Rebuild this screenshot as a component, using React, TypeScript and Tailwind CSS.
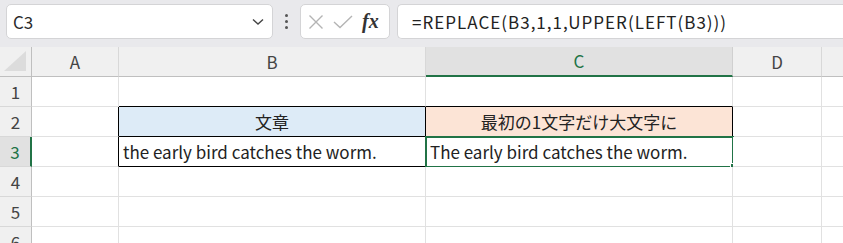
import React from 'react'

const FONT = { fontFamily: '"Noto Sans CJK JP", "Noto Sans", sans-serif' }

const COLS = ['A', 'B', 'C', 'D', 'E']
const ROWS = [1, 2, 3, 4, 5, 6]

// which cells carry the black table border
const blackRight = new Set(['A2', 'A3', 'B2', 'C2', 'B3', 'C3'])
const blackBottom = new Set(['B1', 'C1', 'B2', 'C2', 'B3', 'C3'])

const CELLS: Record<string, { text: string; className: string }> = {
  B2: { text: '文章', className: 'bg-[#ddebf7] justify-center' },
  C2: { text: '最初の1文字だけ大文字に', className: 'bg-[#fce4d6] justify-center' },
  B3: { text: 'the early bird catches the worm.', className: 'bg-white justify-start pl-[4px]' },
  C3: { text: 'The early bird catches the worm.', className: 'bg-white justify-start pl-[4px]' },
}

function Toolbar() {
  return (
    <div className="h-[47px] bg-[#e9e9ec] flex items-start pt-[4px] pl-[6px] gap-0">
      {/* name box */}
      <div className="w-[267px] h-[35px] bg-white border border-[#d4d4d6] rounded-[5px] flex items-center pl-[6px] pr-[8px]">
        <span className="text-[17px] text-[#2b2b2b] flex-1">C3</span>
        <svg width="12" height="8" viewBox="0 0 12 8" className="mt-[1px]">
          <path d="M1 1.5 L6 6 L11 1.5" fill="none" stroke="#444" strokeWidth="1.4" />
        </svg>
      </div>
      {/* dots */}
      <div className="w-[27px] h-[35px] flex flex-col items-center justify-center gap-[3px]">
        <div className="w-[3px] h-[3px] bg-[#555] rounded-full" />
        <div className="w-[3px] h-[3px] bg-[#555] rounded-full" />
        <div className="w-[3px] h-[3px] bg-[#555] rounded-full" />
      </div>
      {/* cancel / enter / fx */}
      <div className="w-[90px] h-[35px] bg-white border border-[#d4d4d6] rounded-[5px] flex items-center pl-[7px] gap-[9px]">
        <svg width="16" height="16" viewBox="0 0 16 16">
          <path d="M1.5 1.5 L14.5 14.5 M14.5 1.5 L1.5 14.5" stroke="#b4b4b4" strokeWidth="1.4" />
        </svg>
        <svg width="20" height="14" viewBox="0 0 20 14">
          <path d="M1 7 L7 12.5 L19 1" fill="none" stroke="#b4b4b4" strokeWidth="1.4" />
        </svg>
        <span
          className="text-[20px] italic font-bold text-[#333] leading-none -mt-[2px]"
          style={{ fontFamily: '"Liberation Serif", "DejaVu Serif", serif' }}
        >
          fx
        </span>
      </div>
      <div className="w-[7px]" />
      {/* formula bar */}
      <div className="flex-1 h-[35px] bg-white border border-r-0 border-[#d4d4d6] rounded-l-[5px] flex items-center pl-[14px]">
        <span className="text-[17px] tracking-[1px] text-[#222]">=REPLACE(B3,1,1,UPPER(LEFT(B3)))</span>
      </div>
    </div>
  )
}

function Sheet() {
  return (
    <div className="grid grid-cols-[32px_87px_307px_307px_89px_89px] auto-rows-[30px] w-[911px]">
      {/* corner */}
      <div className="bg-[#f0f0f0] border-r border-b border-[#bfbfbf] flex items-end justify-end pr-[5px] pb-[5px]">
        <svg width="22" height="20" viewBox="0 0 22 20">
          <path d="M22 0 L22 20 L0 20 Z" fill="#dcdcdc" />
        </svg>
      </div>
      {COLS.map((c) =>
        c === 'C' ? (
          <div
            key={c}
            className="bg-[#e1e1e1] border-r border-r-[#d0d0d0] border-b-2 border-b-[#217346] flex items-center justify-center text-[17px] text-[#217346]"
          >
            {c}
          </div>
        ) : (
          <div
            key={c}
            className="bg-[#f0f0f0] border-r border-r-[#d8d8d8] border-b border-b-[#bfbfbf] flex items-center justify-center text-[17px] text-[#444]"
          >
            {/* E is scrolled past the window edge */}
            {c === 'E' ? '' : c}
          </div>
        )
      )}
      {ROWS.map((r) => (
        <React.Fragment key={r}>
          {r === 3 ? (
            <div className="bg-[#e1e1e1] border-r-2 border-r-[#217346] border-b border-b-[#d8d8d8] flex items-center justify-center text-[17px] text-[#217346]">
              {r}
            </div>
          ) : (
            <div className="bg-[#f0f0f0] border-r border-r-[#bfbfbf] border-b border-b-[#d8d8d8] flex items-center justify-center text-[17px] text-[#444]">
              {r}
            </div>
          )}
          {COLS.map((c) => {
            const id = `${c}${r}`
            const cell = CELLS[id]
            const right = blackRight.has(id) ? 'border-r-black' : 'border-r-[#e1e1e1]'
            const bottom = blackBottom.has(id) ? 'border-b-black' : 'border-b-[#e1e1e1]'
            return (
              <div
                key={id}
                className={`relative border-r border-b ${right} ${bottom} flex items-center text-[17px] text-[#222] whitespace-nowrap ${cell ? cell.className : 'bg-white'}`}
              >
                {cell?.text}
                {id === 'C3' && (
                  <div className="absolute left-[-1px] top-[-1px] right-[-2px] bottom-[-2px] border-2 border-[#217346]">
                    <div className="absolute right-[-5px] bottom-[-4px] w-[7px] h-[7px] bg-[#217346] border border-white" />
                  </div>
                )}
              </div>
            )
          })}
        </React.Fragment>
      ))}
    </div>
  )
}

export default function App() {
  return (
    <div className="w-[843px] h-[243px] overflow-hidden bg-white" style={FONT}>
      <Toolbar />
      <Sheet />
    </div>
  )
}
